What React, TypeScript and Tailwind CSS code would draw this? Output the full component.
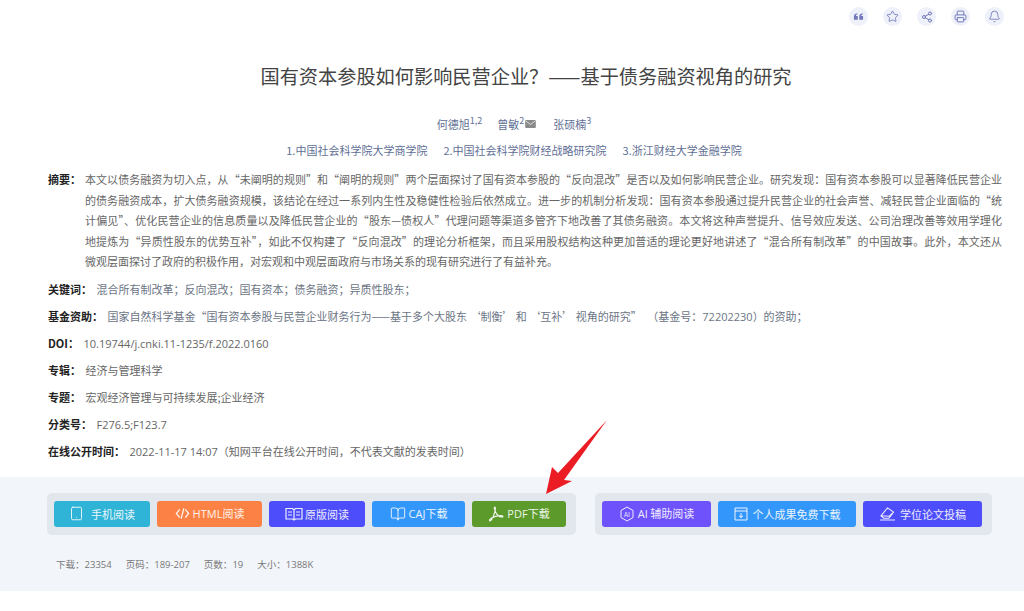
import React from "react";
import { Star, Share2, Printer, Bell, Tablet, BookOpen } from "lucide-react";

// Converts ASCII punctuation in Chinese copy to its full-width form.
const fw = (s: string) =>
  s
    .replace(/,/g, "\uFF0C")
    .replace(/:/g, "\uFF1A")
    .replace(/;/g, "\uFF1B")
    .replace(/\?/g, "\uFF1F")
    .replace(/\(/g, "\uFF08")
    .replace(/\)/g, "\uFF09");

const abstractLines = [
  "本文以债务融资为切入点,从“未阐明的规则”和“阐明的规则”两个层面探讨了国有资本参股的“反向混改”是否以及如何影响民营企业。研究发现:国有资本参股可以显著降低民营企业",
  "的债务融资成本,扩大债务融资规模,该结论在经过一系列内生性及稳健性检验后依然成立。进一步的机制分析发现:国有资本参股通过提升民营企业的社会声誉、减轻民营企业面临的“统",
  "计偏见”、优化民营企业的信息质量以及降低民营企业的“股东—债权人”代理问题等渠道多管齐下地改善了其债务融资。本文将这种声誉提升、信号效应发送、公司治理改善等效用学理化",
  "地提炼为“异质性股东的优势互补”,如此不仅构建了“反向混改”的理论分析框架,而且采用股权结构这种更加普适的理论更好地讲述了“混合所有制改革”的中国故事。此外,本文还从",
];

function Circle({ children }: { children: React.ReactNode }) {
  return (
    <span className="flex h-[19px] w-[19px] items-center justify-center rounded-full bg-[#eff1fa] text-[#7078b8]">
      {children}
    </span>
  );
}

function Row({ label, children, tone = "text-[#666]" }: { label: string; children: React.ReactNode; tone?: string }) {
  return (
    <div className={`flex h-[27px] items-center text-[11px] ${tone}`}>
      <span className="mr-[4.5px] font-bold text-[#222]">{fw(label)}</span>
      <span className="whitespace-pre">{children}</span>
    </div>
  );
}

function Latin({ children }: { children: React.ReactNode }) {
  return <span className="font-['Open_Sans',sans-serif]">{children}</span>;
}

function Btn({ w, color, icon, text, gap = "gap-[5px]" }: { w: string; color: string; icon: React.ReactNode; text: React.ReactNode; gap?: string }) {
  return (
    <div className={`flex h-[26px] items-center justify-center rounded-[3px] text-[11px] text-white/90 ${w} ${color} ${gap}`}>
      {icon}
      <span>{text}</span>
    </div>
  );
}

export default function App() {
  return (
    <div className="relative h-[611px] w-[1024px] overflow-hidden bg-white font-['Noto_Sans_CJK_SC','Microsoft_YaHei',sans-serif]">
      <div className="flex h-[26px] items-end justify-end gap-[15px] pr-[20px]">
        <Circle>
          <svg viewBox="0 0 12 12" className="h-[11px] w-[11px]" fill="currentColor">
            <path d="M1 9.5 V6.2 C1 4 2.2 2.8 4.6 2.4 L5 3.6 C3.8 3.9 3.2 4.5 3.2 5.4 H5.2 V9.5 Z" />
            <path d="M6.8 9.5 V6.2 C6.8 4 8 2.8 10.4 2.4 L10.8 3.6 C9.6 3.9 9 4.5 9 5.4 H11 V9.5 Z" />
          </svg>
        </Circle>
        <Circle><Star size={13} strokeWidth={1.6} /></Circle>
        <Circle><Share2 size={12} strokeWidth={2} /></Circle>
        <Circle><Printer size={13} strokeWidth={1.8} /></Circle>
        <Circle><Bell size={13} strokeWidth={1.6} /></Circle>
      </div>

      <h1 className="mt-[35px] h-[30px] pl-[28px] text-center text-[19.2px] leading-[30px] font-normal text-[#444]">
        {fw("国有资本参股如何影响民营企业?——基于债务融资视角的研究")}
      </h1>

      <div className="mt-[24px] flex h-[18px] items-center justify-center gap-[15px] pl-[4px] text-[11px] text-[#5f6f95]">
        <span>何德旭<sup className="text-[9px]">1,2</sup></span>
        <span className="mr-[2px] flex items-center gap-[1px]">
          <span>曾敏<sup className="text-[9px]">2</sup></span>
          <svg viewBox="0 0 12 9" className="h-[8px] w-[11px]">
            <rect width="12" height="9" rx="1" fill="#8a8a8a" />
            <path d="M0.5 1 6 5 11.5 1" fill="none" stroke="#fff" strokeWidth="0.8" />
          </svg>
        </span>
        <span>张硕楠<sup className="text-[9px]">3</sup></span>
      </div>
      <div className="mt-[8px] flex h-[18px] items-center justify-center gap-[16px] pl-[4px] text-[11px] text-[#5f6f95]">
        <span>1.中国社会科学院大学商学院</span>
        <span>2.中国社会科学院财经战略研究院</span>
        <span>3.浙江财经大学金融学院</span>
      </div>

      <div className="mt-[10px] flex pr-[22px] pl-[48px] text-[11px] leading-[20.6px] text-[#666]">
        <span className="w-[37px] shrink-0 font-bold text-[#222]">{fw("摘要:")}</span>
        <div className="min-w-0 flex-1">
          {abstractLines.map((l) => (
            <div key={l} className="whitespace-nowrap [text-align-last:justify]">{fw(l)}</div>
          ))}
          <div>{fw("微观层面探讨了政府的积极作用,对宏观和中观层面政府与市场关系的现有研究进行了有益补充。")}</div>
        </div>
      </div>

      <div className="mt-[4px] pl-[48px]">
        <Row label="关键词:" tone="text-[#6c7585]">{fw("混合所有制改革;反向混改;国有资本;债务融资;异质性股东;")}</Row>
        <Row label="基金资助:" tone="text-[#6c7585]">
          {fw("国家自然科学基金“国有资本参股与民营企业财务行为——基于多个大股东 ‘制衡’ 和 ‘互补’ 视角的研究”\u2002(基金号:")}
          <Latin>72202230</Latin>
          {fw(")的资助;")}
        </Row>
        <Row label="DOI:"><Latin>10.19744/j.cnki.11-1235/f.2022.0160</Latin></Row>
        <Row label="专辑:">经济与管理科学</Row>
        <Row label="专题:">宏观经济管理与可持续发展;企业经济</Row>
        <Row label="分类号:"><Latin>F276.5;F123.7</Latin></Row>
        <Row label="在线公开时间:"><Latin>2022-11-17 14:07</Latin>{fw("(知网平台在线公开时间,不代表文献的发表时间)")}</Row>
      </div>

      <div className="mt-[12px] h-[114px] bg-[#f2f5fa] pt-[16px] pl-[47px]">
        <div className="flex items-start gap-[19px]">
          <div className="flex h-[42px] w-[529px] items-center gap-[7px] rounded-[5px] bg-[#e2e7ee] pl-[7px]">
            <Btn w="w-[96px]" color="bg-[#2fb3d6]" gap="gap-[7px]" icon={<Tablet size={15} strokeWidth={1.5} />} text="手机阅读" />
            <Btn w="w-[105px]" color="bg-[#fb8244]" gap="gap-[3px]" icon={
              <svg viewBox="0 0 16 16" className="h-[15px] w-[15px]" fill="none" stroke="currentColor" strokeWidth="1.4"><path d="M5 3.5 1.5 8 5 12.5M11 3.5 14.5 8 11 12.5M9.4 2.5 6.6 13.5" /></svg>
            } text={<><Latin>HTML</Latin>阅读</>} />
            <Btn w="w-[96px]" color="bg-[#4d4dfb]" gap="gap-[2px]" icon={
              <svg viewBox="0 0 18 14" className="h-[14px] w-[18px]" fill="none" stroke="currentColor" strokeWidth="1.2"><path d="M1 1.5H7.5L9 3 10.5 1.5H17V12H10.5L9 13 7.5 12H1ZM9 3V13M3 5H7M3 8H7M11 5H15M11 8H15" /></svg>
            } text="原版阅读" />
            <Btn w="w-[93px]" color="bg-[#3296fa]" gap="gap-[3px]" icon={<BookOpen size={16} strokeWidth={1.4} />} text={<><Latin>CAJ</Latin>下载</>} />
            <Btn w="w-[94px]" color="bg-[#5b9a2b]" gap="gap-[3px]" icon={
              <svg viewBox="0 0 16 16" className="h-[16px] w-[16px]" fill="none" stroke="currentColor" strokeWidth="1.2"><path d="M6.8 1.2C5.8 1.2 6.6 4.8 8.8 8.2 10 10 11.8 11 14 11 15.6 11 15 9.6 13 9.6 9.6 9.6 3.6 11 1.8 13.6 0.8 15.4 2.6 15.2 4 13 5.8 10.4 8.6 1.2 6.8 1.2Z" /></svg>
            } text={<><Latin>PDF</Latin>下载</>} />
          </div>
          <div className="flex h-[42px] w-[397px] items-center gap-[7px] rounded-[5px] bg-[#e2e7ee] pl-[7px]">
            <Btn w="w-[109px]" color="bg-[#6e52fb]" gap="gap-[3px]" icon={
              <svg viewBox="0 0 16 16" className="h-[16px] w-[16px]" fill="none" stroke="currentColor" strokeWidth="1"><path d="M8 1 14 4.5V11.5L8 15 2 11.5V4.5Z" /><text x="8" y="10.5" textAnchor="middle" fontSize="6.5" fill="currentColor" stroke="none">AI</text></svg>
            } text={<><Latin>AI</Latin> 辅助阅读</>} />
            <Btn w="w-[138px]" color="bg-[#3296fa]" gap="gap-[5px]" icon={
              <svg viewBox="0 0 14 14" className="h-[14px] w-[14px]" fill="none" stroke="currentColor" strokeWidth="1"><path d="M1 1H13V13H1ZM1 4H13M7 6V10.5M5 8.8 7 10.5 9 8.8" /></svg>
            } text="个人成果免费下载" />
            <Btn w="w-[119px]" color="bg-[#4d4dfb]" gap="gap-[4px]" icon={
              <svg viewBox="0 0 18 16" className="h-[15px] w-[17px]" fill="none" stroke="currentColor" strokeWidth="1.1"><path d="M2 10.5 9 2 15.5 6.5 10.5 13H5ZM2 10.5 10.5 11 15.5 6.5M1 15H17" /></svg>
            } text="学位论文投稿" />
          </div>
        </div>
        <div className="mt-[20px] flex gap-[14px] pl-[9px] text-[9.5px] leading-[18px] text-[#777]">
          <span>{fw("下载:")}<Latin>23354</Latin></span>
          <span>{fw("页码:")}<Latin>189-207</Latin></span>
          <span>{fw("页数:")}<Latin>19</Latin></span>
          <span>{fw("大小:")}<Latin>1388K</Latin></span>
        </div>
      </div>

      <svg className="absolute top-[418px] left-[544px] h-[78px] w-[64px]" viewBox="544 418 64 78">
        <polygon points="546,494 552,467 558,473 607,420 564,480 572,481" fill="#ec1c24" />
      </svg>
    </div>
  );
}
